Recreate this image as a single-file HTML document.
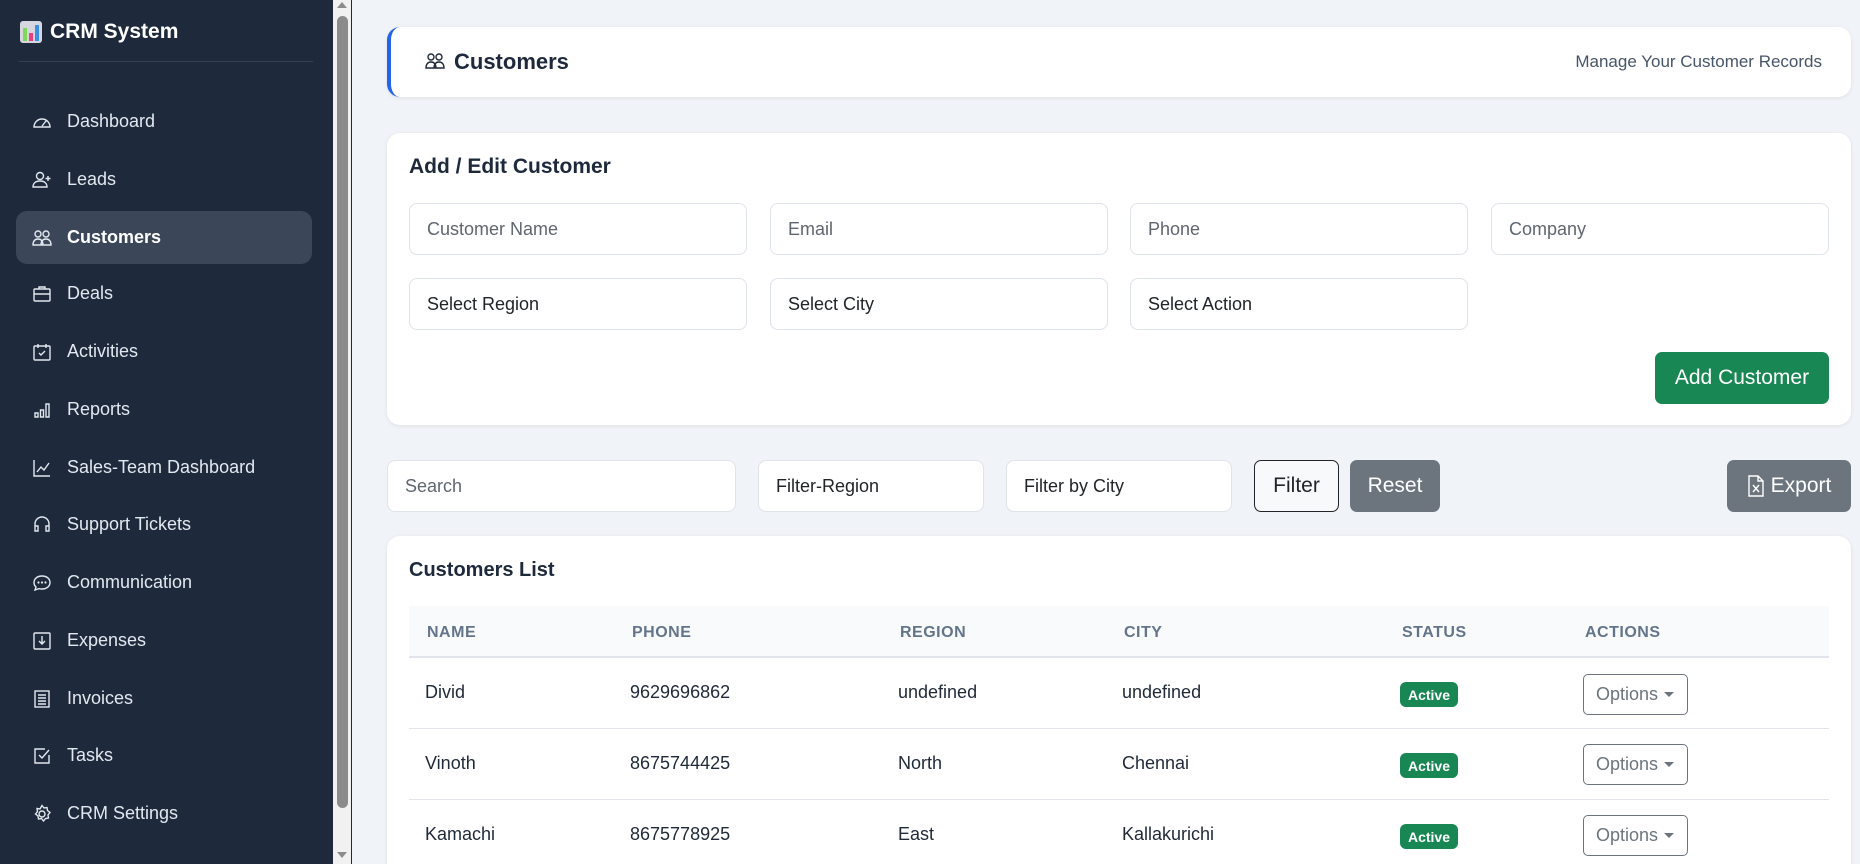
<!DOCTYPE html>
<html style="width:1860px;height:864px;overflow:hidden"><head><meta charset="utf-8"><style>
*{box-sizing:border-box;margin:0;padding:0}
body{width:1860px;height:864px;overflow:hidden;background:#f0f3f8;font-family:"Liberation Sans",sans-serif;position:relative;color:#212529}
.sb{position:absolute;left:0;top:0;width:333px;height:864px;background:#1e293b;color:#e2e8f0}
.logo{position:absolute;left:20px;top:20px;font-size:21px;font-weight:bold;color:#fff;display:flex;align-items:center;gap:8px}
.div{position:absolute;left:19px;top:61px;width:294px;height:1px;background:#334155}
.nav{position:absolute;left:16px;width:296px;height:53px;display:flex;align-items:center;font-size:18px;color:#e2e8f0;border-radius:11px}
.nav svg{position:absolute;left:16px;width:20px;height:20px;fill:none;stroke:#e2e8f0;stroke-width:1.4}
.nav span{position:absolute;left:51px}
.nav.act{background:#3b4758;font-weight:bold;color:#fff}
.scr{position:absolute;left:333px;top:0;width:19px;height:864px;background:#f1f1f1;border-right:1px solid #1e293b}
.thumb{position:absolute;left:337px;top:16px;width:11px;height:792px;background:#8b8b8b;border-radius:6px}
.card{position:absolute;background:#fff;border-radius:13px;box-shadow:0 1px 4px rgba(0,0,0,.08)}
.inp{position:absolute;height:52px;border:1px solid #dfe3ea;border-radius:8px;background:#fff;font-size:18px;color:#5f6670;display:flex;align-items:center;padding-left:17px}
.inp.d{color:#212529}
.btn{position:absolute;height:52px;border-radius:7px;display:flex;align-items:center;justify-content:center;font-size:21px}
th{font-size:16px;color:#64748b;text-align:left;font-weight:bold;letter-spacing:.5px}
.h{position:absolute;top:622px}
.r{position:absolute;font-size:18px;color:#1f2937}
.badge{position:absolute;left:1400px;width:58px;height:25px;background:#198754;color:#fff;border-radius:6px;font-size:14px;font-weight:bold;display:flex;align-items:center;justify-content:center}
.opt{position:absolute;left:1583px;width:105px;height:41px;border:1px solid #6c757d;border-radius:5px;font-size:18px;color:#6c757d;display:flex;align-items:center;padding-left:12px}
.opt:after{content:"";border-left:5px solid transparent;border-right:5px solid transparent;border-top:5px solid #6c757d;margin-left:6px}
.sep{position:absolute;left:409px;width:1420px;height:1px;background:#e2e6ec}
</style></head><body>
<div class="sb">
<div class="logo"><svg width="22" height="22" viewBox="0 0 22 22"><rect x="0" y="0" width="22" height="22" rx="3" fill="#d6d6e0"/><rect x="3" y="7" width="4" height="13" fill="#7ed957"/><rect x="9" y="12" width="4" height="8" fill="#ee3e7c"/><rect x="15" y="4" width="4" height="16" fill="#3a8ee6"/></svg>CRM System</div>
<div class="div"></div>
<div class="nav" style="top:95px"><svg viewBox="0 0 20 20"><path d="M2 15a8 8 0 1 1 16 0zM10 14l4-5M6 11h0M10 8h0"/></svg><span>Dashboard</span></div>
<div class="nav" style="top:153px"><svg viewBox="0 0 20 20"><circle cx="8" cy="6" r="3.5"/><path d="M1 17c0-4 3-6 7-6s7 2 7 6zM16 6v5M13.5 8.5h5"/></svg><span>Leads</span></div>
<div class="nav act" style="top:211px"><svg viewBox="0 0 20 20"><circle cx="6" cy="6" r="3"/><circle cx="14" cy="6" r="3"/><path d="M1 17c0-4 2-6 5-6s5 2 5 6zM9 17c0-4 2-6 5-6s5 2 5 6z"/></svg><span>Customers</span></div>
<div class="nav" style="top:267px"><svg viewBox="0 0 20 20"><rect x="2" y="5" width="16" height="12" rx="1"/><path d="M7 5V3h6v2M2 10h16"/></svg><span>Deals</span></div>
<div class="nav" style="top:325px"><svg viewBox="0 0 20 20"><rect x="2" y="4" width="16" height="14" rx="1"/><path d="M6 2v4M14 2v4M7 11l2 2 4-4"/></svg><span>Activities</span></div>
<div class="nav" style="top:383px"><svg viewBox="0 0 20 20"><path d="M3 17v-4h3v4zM8.5 17v-7h3v7zM14 17V4h3v13z"/></svg><span>Reports</span></div>
<div class="nav" style="top:441px"><svg viewBox="0 0 20 20"><path d="M2 2v16h16M5 14l4-5 3 3 5-7"/></svg><span>Sales-Team Dashboard</span></div>
<div class="nav" style="top:498px"><svg viewBox="0 0 20 20"><path d="M3 12V9a7 7 0 0 1 14 0v3M3 11h3v5H3zM14 11h3v5h-3z"/></svg><span>Support Tickets</span></div>
<div class="nav" style="top:556px"><svg viewBox="0 0 20 20"><path d="M10 3c5 0 8 3 8 6.5S15 16 10 16c-1 0-2 0-3-.4L3 17l1-3C2.5 12.7 2 11 2 9.5 2 6 5 3 10 3z"/><path d="M6.5 9.5h0M10 9.5h0M13.5 9.5h0" stroke-width="2.2" stroke-linecap="round"/></svg><span>Communication</span></div>
<div class="nav" style="top:614px"><svg viewBox="0 0 20 20"><rect x="2" y="2" width="16" height="16" rx="1"/><path d="M10 5v8M7 10l3 3 3-3"/></svg><span>Expenses</span></div>
<div class="nav" style="top:672px"><svg viewBox="0 0 20 20"><rect x="3" y="2" width="14" height="16"/><path d="M6 6h8M6 9h8M6 12h8M6 15h8"/></svg><span>Invoices</span></div>
<div class="nav" style="top:729px"><svg viewBox="0 0 20 20"><path d="M17 9v8H3V3h10M7 9l3 3 7-8"/></svg><span>Tasks</span></div>
<div class="nav" style="top:787px"><svg viewBox="0 0 20 20"><circle cx="10" cy="10" r="3"/><path d="M10 1.5l2 2.5 3-.5.5 3 2.5 2-2 2.5.5 3-3 .5-2 2.5-2-2.5-3 .5-.5-3-2.5-2 2-2.5-.5-3 3 .5z"/></svg><span>CRM Settings</span></div>
</div>
<div class="scr"></div><div class="thumb"></div>
<div style="position:absolute;left:337px;top:2px;border-left:5px solid transparent;border-right:5px solid transparent;border-bottom:6px solid #8b8b8b"></div>
<div style="position:absolute;left:337px;top:852px;border-left:5px solid transparent;border-right:5px solid transparent;border-top:6px solid #8b8b8b"></div>

<div class="card" style="left:387px;top:27px;width:1464px;height:70px;border-left:4px solid #2563eb">
<svg style="position:absolute;left:33px;top:24px" width="22" height="20" viewBox="0 0 20 20" fill="none" stroke="#1e293b" stroke-width="1.4"><circle cx="6" cy="6" r="3"/><circle cx="14" cy="6" r="3"/><path d="M1 17c0-4 2-6 5-6s5 2 5 6zM9 17c0-4 2-6 5-6s5 2 5 6z"/></svg>
<div style="position:absolute;left:63px;top:22px;font-size:22px;font-weight:bold;color:#1e293b">Customers</div>
<div style="position:absolute;right:29px;top:25px;font-size:17px;color:#475569">Manage Your Customer Records</div>
</div>

<div class="card" style="left:387px;top:133px;width:1464px;height:292px"></div>
<div style="position:absolute;left:409px;top:155px;font-size:21px;font-weight:bold;color:#1e293b">Add / Edit Customer</div>
<div class="inp" style="left:409px;top:203px;width:338px">Customer Name</div>
<div class="inp" style="left:770px;top:203px;width:338px">Email</div>
<div class="inp" style="left:1130px;top:203px;width:338px">Phone</div>
<div class="inp" style="left:1491px;top:203px;width:338px">Company</div>
<div class="inp d" style="left:409px;top:278px;width:338px">Select Region</div>
<div class="inp d" style="left:770px;top:278px;width:338px">Select City</div>
<div class="inp d" style="left:1130px;top:278px;width:338px">Select Action</div>
<div class="btn" style="left:1655px;top:352px;width:174px;background:#198754;color:#fff">Add Customer</div>

<div class="inp" style="left:387px;top:460px;width:349px">Search</div>
<div class="inp d" style="left:758px;top:460px;width:226px">Filter-Region</div>
<div class="inp d" style="left:1006px;top:460px;width:226px">Filter by City</div>
<div class="btn" style="left:1254px;top:460px;width:85px;border:1px solid #212529;background:#f8f9fa">Filter</div>
<div class="btn" style="left:1350px;top:460px;width:90px;background:#6c757d;color:#fff">Reset</div>
<div class="btn" style="left:1727px;top:460px;width:124px;background:#6c757d;color:#fff"><svg width="18" height="22" viewBox="0 0 18 22" fill="none" stroke="#fff" stroke-width="1.4" style="margin-right:6px"><path d="M2 1h9l5 5v15H2zM11 1v5h5M6 10l6 7M12 10l-6 7"/></svg>Export</div>

<div class="card" style="left:387px;top:536px;width:1464px;height:340px;border-bottom-left-radius:0;border-bottom-right-radius:0"></div>
<div style="position:absolute;left:409px;top:559px;font-size:20px;font-weight:bold;color:#1e293b">Customers List</div>
<div style="position:absolute;left:409px;top:606px;width:1420px;height:52px;background:#f8fafc;border-bottom:2px solid #e2e6ec"></div>
<div class="h" style="left:425px"><table><tr><th>NAME</th></tr></table></div>
<div class="h" style="left:630px"><table><tr><th>PHONE</th></tr></table></div>
<div class="h" style="left:898px"><table><tr><th>REGION</th></tr></table></div>
<div class="h" style="left:1122px"><table><tr><th>CITY</th></tr></table></div>
<div class="h" style="left:1400px"><table><tr><th>STATUS</th></tr></table></div>
<div class="h" style="left:1583px"><table><tr><th>ACTIONS</th></tr></table></div>

<div class="r" style="left:425px;top:682px">Divid</div><div class="r" style="left:630px;top:682px">9629696862</div><div class="r" style="left:898px;top:682px">undefined</div><div class="r" style="left:1122px;top:682px">undefined</div>
<div class="badge" style="top:682px">Active</div><div class="opt" style="top:674px">Options</div>
<div class="sep" style="top:728px"></div>
<div class="r" style="left:425px;top:753px">Vinoth</div><div class="r" style="left:630px;top:753px">8675744425</div><div class="r" style="left:898px;top:753px">North</div><div class="r" style="left:1122px;top:753px">Chennai</div>
<div class="badge" style="top:753px">Active</div><div class="opt" style="top:744px">Options</div>
<div class="sep" style="top:799px"></div>
<div class="r" style="left:425px;top:824px">Kamachi</div><div class="r" style="left:630px;top:824px">8675778925</div><div class="r" style="left:898px;top:824px">East</div><div class="r" style="left:1122px;top:824px">Kallakurichi</div>
<div class="badge" style="top:824px">Active</div><div class="opt" style="top:815px">Options</div>
</body></html>
